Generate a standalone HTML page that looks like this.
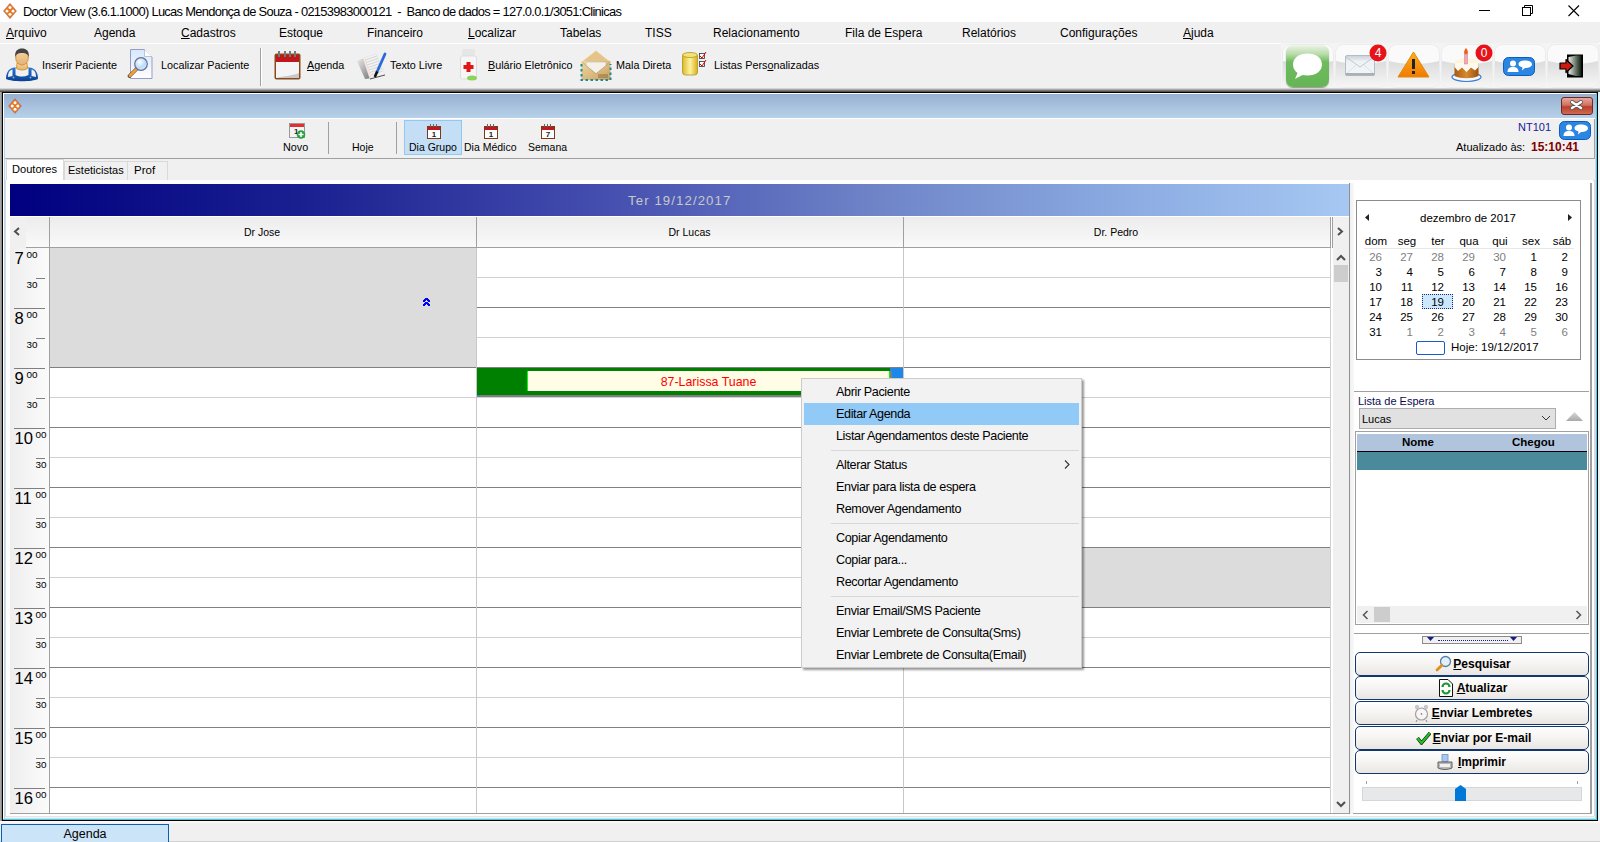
<!DOCTYPE html><html><head><meta charset="utf-8"><style>
*{box-sizing:border-box}
body{margin:0;width:1600px;height:842px;position:relative;overflow:hidden;background:#f0f0f0;font-family:"Liberation Sans",sans-serif;color:#000}
.t{position:absolute;white-space:pre;line-height:1}
u{text-decoration:underline;text-underline-offset:1px}
</style></head><body>
<div style="position:absolute;left:0px;top:0px;width:1600px;height:22px;background:#fff"></div>
<svg style="position:absolute;left:3px;top:3px" width="14" height="16" viewBox="0 0 14 16"><path d="M7 0.3 L13.6 8 L7 15.7 L0.4 8 Z" fill="#e8761e" stroke="#7a5a9a" stroke-width="0.35"/><circle cx="7" cy="4.6" r="1.5" fill="#fff"/><circle cx="7" cy="11.2" r="1.5" fill="#fff"/><circle cx="4" cy="8" r="1.5" fill="#fff"/><circle cx="10" cy="8" r="1.5" fill="#fff"/></svg>
<div class="t" style="left:23px;top:6px;font-size:12.9px;letter-spacing:-0.7px;color:#000">Doctor View (3.6.1.1000) Lucas Mendonça de Souza - 02153983000121  -  Banco de dados = 127.0.0.1/3051:Clinicas</div>
<div style="position:absolute;left:1479px;top:10px;width:11px;height:1px;background:#000"></div>
<svg style="position:absolute;left:1522px;top:5px" width="12" height="12" viewBox="0 0 12 12"><rect x="0.5" y="2.5" width="8" height="8" fill="none" stroke="#000"/><path d="M2.5 2.5 V0.5 H10.5 V8.5 H8.5" fill="none" stroke="#000"/></svg>
<svg style="position:absolute;left:1568px;top:5px" width="12" height="12" viewBox="0 0 12 12"><path d="M0.5 0.5 L11 11 M11 0.5 L0.5 11" stroke="#000" stroke-width="1.1"/></svg>
<div style="position:absolute;left:0px;top:22px;width:1600px;height:21px;background:#f0f0f0"></div>
<div class="t" style="left:6px;top:27px;font-size:12px"><u>A</u>rquivo</div>
<div class="t" style="left:94px;top:27px;font-size:12px">Agenda</div>
<div class="t" style="left:181px;top:27px;font-size:12px"><u>C</u>adastros</div>
<div class="t" style="left:279px;top:27px;font-size:12px">Estoque</div>
<div class="t" style="left:367px;top:27px;font-size:12px">Financeiro</div>
<div class="t" style="left:468px;top:27px;font-size:12px"><u>L</u>ocalizar</div>
<div class="t" style="left:560px;top:27px;font-size:12px">Tabelas</div>
<div class="t" style="left:645px;top:27px;font-size:12px">TISS</div>
<div class="t" style="left:713px;top:27px;font-size:12px">Relacionamento</div>
<div class="t" style="left:845px;top:27px;font-size:12px">Fila de Espera</div>
<div class="t" style="left:962px;top:27px;font-size:12px">Relatórios</div>
<div class="t" style="left:1060px;top:27px;font-size:12px">Configurações</div>
<div class="t" style="left:1183px;top:27px;font-size:12px"><u>A</u>juda</div>
<div style="position:absolute;left:0px;top:43px;width:1600px;height:1px;background:#fff"></div>
<div style="position:absolute;left:0px;top:44px;width:1600px;height:46px;background:#f0f0f0"></div>
<svg style="position:absolute;left:0px;top:44px" width="44" height="44" viewBox="0 0 44 44"><defs><linearGradient id="ov" x1="0" y1="0" x2="0" y2="1"><stop offset="0" stop-color="#2a78d0"/><stop offset="1" stop-color="#0a3f92"/></linearGradient>
<linearGradient id="fc" x1="0" y1="0" x2="0" y2="1"><stop offset="0" stop-color="#f6d3a0"/><stop offset="1" stop-color="#e2b07a"/></linearGradient></defs>
<path d="M6 35 C6 28 9 24 15 23.5 L29 23.5 C35 24 38 28 38 35 C32 38 12 38 6 35 Z" fill="url(#ov)"/>
<path d="M8 33 C8 28 10 26 12.5 25.5 L12.5 32 Z" fill="#f2f2f2"/><path d="M36 33 C36 28 34 26 31.5 25.5 L31.5 32 Z" fill="#f2f2f2"/>
<path d="M15.5 24 L28.5 24 L28.5 31 C24 33 20 33 15.5 31 Z" fill="#f0f0f0"/>
<circle cx="13.5" cy="33.5" r="1" fill="#7aa8e8"/><circle cx="30.5" cy="33.5" r="1" fill="#7aa8e8"/>
<path d="M17 19 L27 19 L27.5 24.5 C24 26.5 20 26.5 16.5 24.5 Z" fill="url(#fc)" stroke="#d08a10" stroke-width="0.8"/>
<ellipse cx="22" cy="14" rx="6.3" ry="7" fill="url(#fc)" stroke="#d08a10" stroke-width="0.8"/>
<path d="M15.2 13.5 C14.5 7 17.5 4.5 22 4.5 C26.5 4.5 29.5 7 28.8 13.5 C28 10 26 9 22 9 C18 9 16 10 15.2 13.5 Z" fill="#444"/></svg>
<div class="t" style="left:42px;top:60px;font-size:10.8px">Inserir Paciente</div>
<svg style="position:absolute;left:127px;top:49px" width="26" height="31" viewBox="0 0 26 31"><defs><linearGradient id="dc" x1="0" y1="0" x2="0" y2="1"><stop offset="0" stop-color="#d4e8fc"/><stop offset="1" stop-color="#ffffff"/></linearGradient><radialGradient id="lens" cx="0.4" cy="0.35" r="0.7"><stop offset="0" stop-color="#ffffff"/><stop offset="0.6" stop-color="#b8def8"/><stop offset="1" stop-color="#d8f0ff"/></radialGradient></defs>
<path d="M3.5 0.5 H17.5 L25 8 V29.5 H3.5 Z" fill="url(#dc)" stroke="#9a9ac8"/><path d="M17.5 0.5 V7.5 H25" fill="#fff" stroke="#b0b8c8" stroke-width="0.8"/>
<path d="M9 20.5 L2.5 27" stroke="#303030" stroke-width="3.6" stroke-linecap="round"/><path d="M9 20.5 L2.8 26.7" stroke="#f4a030" stroke-width="2.8" stroke-linecap="round"/>
<circle cx="14" cy="15" r="6.3" fill="url(#lens)" stroke="#6a6a9a" stroke-width="1.2"/></svg>
<div class="t" style="left:161px;top:60px;font-size:10.8px">Localizar Paciente</div>
<div style="position:absolute;left:260px;top:48px;width:1px;height:38px;background:#a0a0a0"></div>
<div style="position:absolute;left:261px;top:48px;width:1px;height:38px;background:#fff"></div>
<svg style="position:absolute;left:274px;top:51px" width="27" height="29" viewBox="0 0 27 29"><rect x="0.5" y="2.5" width="26" height="26" rx="2" fill="#8a4a1c"/><rect x="2" y="4" width="23" height="7" fill="#c0161c"/><rect x="2" y="11" width="23" height="16" fill="#f4f4f4"/><path d="M2 27 L25 27 L25 22 C18 25 10 25 2 27Z" fill="#c8c8c8"/>
<rect x="4" y="0" width="2" height="6" fill="#777"/><rect x="10" y="0" width="2" height="6" fill="#777"/><rect x="15" y="0" width="2" height="6" fill="#777"/><rect x="20" y="0" width="2" height="6" fill="#777"/></svg>
<div class="t" style="left:307px;top:60px;font-size:10.8px"><u>A</u>genda</div>
<svg style="position:absolute;left:354px;top:49px" width="36" height="31" viewBox="0 0 36 31"><defs><linearGradient id="bs" x1="0" y1="0" x2="1" y2="1"><stop offset="0" stop-color="#f0f0f0"/><stop offset="1" stop-color="#707070"/></linearGradient></defs>
<path d="M3 12 L12 8 L19 29 L11 30 Z" fill="url(#bs)"/>
<path d="M9 9 L22 5 L31 25 L16 30 Z" fill="#f2f2f2" stroke="#e0e0e0" stroke-width="0.6"/>
<path d="M11 11 L23 7 M12 13.5 L24 9.5 M13 16 L25 12 M14 18.5 L26 14.5 M15 21 L27 17 M16 23.5 L28 19.5 M17 26 L28.5 22" stroke="#c8c8c8" stroke-width="0.7"/>
<path d="M11 10 L17 29" stroke="#f8c0a0" stroke-width="0.5"/>
<path d="M16 30 L31 26" stroke="#404040" stroke-width="0.9"/>
<path d="M31 5 L23 23" stroke="#2a6ad8" stroke-width="2.8" stroke-linecap="round"/><path d="M23.2 22.5 L20.8 28" stroke="#111" stroke-width="2.6"/></svg>
<div class="t" style="left:390px;top:60px;font-size:10.8px">Texto Livre</div>
<svg style="position:absolute;left:459px;top:49px" width="19" height="32" viewBox="0 0 19 32"><rect x="3" y="0" width="13" height="7" rx="1.5" fill="#e6e6e6"/><rect x="1.5" y="7" width="16" height="23" rx="2" fill="#f6f6f6" stroke="#ddd"/>
<path d="M7.5 13 H11.5 V16 H14.5 V20 H11.5 V23 H7.5 V20 H4.5 V16 H7.5 Z" fill="#e01515"/><ellipse cx="13" cy="29" rx="5" ry="2.5" fill="#8cd35a"/></svg>
<div class="t" style="left:488px;top:60px;font-size:10.8px"><u>B</u>ulário Eletrônico</div>
<svg style="position:absolute;left:580px;top:49px" width="32" height="32" viewBox="0 0 32 32"><defs><linearGradient id="env" x1="0" y1="0" x2="1" y2="1"><stop offset="0" stop-color="#f2d8a0"/><stop offset="1" stop-color="#c8a060"/></linearGradient></defs>
<path d="M1.5 13 L16 1.5 L30.5 13 Z" fill="#e4c488" stroke="#f4ead0" stroke-width="1" stroke-dasharray="1.5 1"/>
<rect x="1.5" y="12" width="29" height="19" fill="url(#env)"/>
<path d="M6 13 L26 13 L26 17 L16 24.5 L6 17 Z" fill="#f4f0ea" stroke="#b8b0a0" stroke-width="0.5"/>
<path d="M2 13 L16 25 L30 13" fill="none" stroke="#c09a60" stroke-width="0.6"/>
<path d="M18 26 H28 M18 28 H28" stroke="#8a6a3a" stroke-width="0.9"/>
<path d="M1.5 15 V31 H30.5 V15" fill="none" stroke="#1a8a9a" stroke-width="2" stroke-dasharray="2.5 2.5"/></svg>
<div class="t" style="left:616px;top:60px;font-size:10.8px">Mala Direta</div>
<svg style="position:absolute;left:682px;top:52px" width="25" height="25" viewBox="0 0 25 25"><defs><linearGradient id="cy" x1="0" x2="1"><stop offset="0" stop-color="#d9b82a"/><stop offset="0.5" stop-color="#fff2a0"/><stop offset="1" stop-color="#d5b020"/></linearGradient></defs>
<rect x="0.5" y="2" width="15" height="21" rx="3" fill="url(#cy)" stroke="#b39510" stroke-width="0.8"/><ellipse cx="8" cy="3" rx="7.5" ry="2.5" fill="#f3e27a" stroke="#b39510" stroke-width="0.8"/>
<rect x="17.5" y="1.5" width="5" height="5" fill="#fff" stroke="#333" stroke-width="0.8"/><rect x="17.5" y="9.5" width="5" height="5" fill="#fff" stroke="#333" stroke-width="0.8"/><path d="M18 4 L20 6 L24 0 M18 12 L20 14 L24 8" stroke="#d00" stroke-width="1" fill="none"/></svg>
<div class="t" style="left:714px;top:60px;font-size:10.8px">Listas Pers<u>o</u>nalizadas</div>
<div style="position:absolute;left:1281px;top:43px;width:317px;height:46px;background:#f4f4f4"></div>
<svg style="position:absolute;left:1282px;top:44px" width="52" height="44" viewBox="0 0 52 44"><defs><linearGradient id="gb0" x1="0" y1="0" x2="0" y2="1"><stop offset="0" stop-color="#dcdcdc"/><stop offset="1" stop-color="#f6f6f6"/></linearGradient></defs>
<rect x="0.5" y="0.5" width="51" height="43" rx="8" fill="#fafafa" stroke="#ececec"/>
<path d="M1 17 C15 21 37 21 51 17 L51 36 C51 40 48 43 44 43 L8 43 C4 43 1 40 1 36 Z" fill="url(#gb0)"/></svg>
<svg style="position:absolute;left:1335px;top:44px" width="52" height="44" viewBox="0 0 52 44"><defs><linearGradient id="gb1" x1="0" y1="0" x2="0" y2="1"><stop offset="0" stop-color="#dcdcdc"/><stop offset="1" stop-color="#f6f6f6"/></linearGradient></defs>
<rect x="0.5" y="0.5" width="51" height="43" rx="8" fill="#fafafa" stroke="#ececec"/>
<path d="M1 17 C15 21 37 21 51 17 L51 36 C51 40 48 43 44 43 L8 43 C4 43 1 40 1 36 Z" fill="url(#gb1)"/></svg>
<svg style="position:absolute;left:1388px;top:44px" width="52" height="44" viewBox="0 0 52 44"><defs><linearGradient id="gb2" x1="0" y1="0" x2="0" y2="1"><stop offset="0" stop-color="#dcdcdc"/><stop offset="1" stop-color="#f6f6f6"/></linearGradient></defs>
<rect x="0.5" y="0.5" width="51" height="43" rx="8" fill="#fafafa" stroke="#ececec"/>
<path d="M1 17 C15 21 37 21 51 17 L51 36 C51 40 48 43 44 43 L8 43 C4 43 1 40 1 36 Z" fill="url(#gb2)"/></svg>
<svg style="position:absolute;left:1441px;top:44px" width="52" height="44" viewBox="0 0 52 44"><defs><linearGradient id="gb3" x1="0" y1="0" x2="0" y2="1"><stop offset="0" stop-color="#dcdcdc"/><stop offset="1" stop-color="#f6f6f6"/></linearGradient></defs>
<rect x="0.5" y="0.5" width="51" height="43" rx="8" fill="#fafafa" stroke="#ececec"/>
<path d="M1 17 C15 21 37 21 51 17 L51 36 C51 40 48 43 44 43 L8 43 C4 43 1 40 1 36 Z" fill="url(#gb3)"/></svg>
<svg style="position:absolute;left:1494px;top:44px" width="52" height="44" viewBox="0 0 52 44"><defs><linearGradient id="gb4" x1="0" y1="0" x2="0" y2="1"><stop offset="0" stop-color="#dcdcdc"/><stop offset="1" stop-color="#f6f6f6"/></linearGradient></defs>
<rect x="0.5" y="0.5" width="51" height="43" rx="8" fill="#fafafa" stroke="#ececec"/>
<path d="M1 17 C15 21 37 21 51 17 L51 36 C51 40 48 43 44 43 L8 43 C4 43 1 40 1 36 Z" fill="url(#gb4)"/></svg>
<svg style="position:absolute;left:1547px;top:44px" width="52" height="44" viewBox="0 0 52 44"><defs><linearGradient id="gb5" x1="0" y1="0" x2="0" y2="1"><stop offset="0" stop-color="#dcdcdc"/><stop offset="1" stop-color="#f6f6f6"/></linearGradient></defs>
<rect x="0.5" y="0.5" width="51" height="43" rx="8" fill="#fafafa" stroke="#ececec"/>
<path d="M1 17 C15 21 37 21 51 17 L51 36 C51 40 48 43 44 43 L8 43 C4 43 1 40 1 36 Z" fill="url(#gb5)"/></svg>
<div style="position:absolute;left:1286px;top:45px;width:43px;height:42px;border-radius:7px;background:linear-gradient(#eef4ea 0%,#b8dca8 22%,#70bb60 40%,#64b554 100%);box-shadow:0 1px 1px #9a9a9a"></div>
<svg style="position:absolute;left:1292px;top:53px" width="31" height="27" viewBox="0 0 31 27"><path d="M15.5 0.5 C24 0.5 30 5 30 11.5 C30 18 24 22.5 15.5 22.5 C13.5 22.5 12 22.3 10.5 22 L3 26 L5.5 20 C2.5 18 1 15 1 11.5 C1 5 7 0.5 15.5 0.5 Z" fill="#fff"/></svg>
<svg style="position:absolute;left:1345px;top:55px" width="30" height="21" viewBox="0 0 30 21"><defs><linearGradient id="ml" x1="0" y1="0" x2="0" y2="1"><stop offset="0" stop-color="#c8d0d8"/><stop offset="0.3" stop-color="#eef2f5"/><stop offset="1" stop-color="#f4f6f8"/></linearGradient></defs><rect x="0.5" y="0.5" width="29" height="20" rx="1.5" fill="url(#ml)" stroke="#b4bcc4"/><path d="M1 2 L15 12 L29 2" fill="none" stroke="#c0c8d0" stroke-width="1"/><path d="M1 19 L11 10 M29 19 L19 10" stroke="#d4dae0" stroke-width="0.8"/><rect x="0.5" y="18" width="29" height="2.5" fill="#a8b0b8"/></svg>
<svg style="position:absolute;left:1369px;top:44px" width="18" height="18" viewBox="0 0 18 18"><circle cx="9" cy="9" r="8.5" fill="#e8121a"/><text x="9" y="13.2" font-family="Liberation Sans" font-size="12" fill="#fff" text-anchor="middle">4</text></svg>
<svg style="position:absolute;left:1397px;top:51px" width="33" height="27" viewBox="0 0 33 27"><defs><linearGradient id="wr" x1="0" y1="0" x2="0" y2="1"><stop offset="0" stop-color="#ffb020"/><stop offset="1" stop-color="#f07a00"/></linearGradient></defs><path d="M16.5 1 L32 26 L1 26 Z" fill="url(#wr)" stroke="#e08a10" stroke-linejoin="round"/><rect x="15" y="8" width="3" height="10" fill="#222"/><rect x="15" y="20" width="3" height="3" fill="#222"/></svg>
<svg style="position:absolute;left:1451px;top:48px" width="32" height="36" viewBox="0 0 32 36"><defs><linearGradient id="ck" x1="0" x2="1"><stop offset="0" stop-color="#a85a10"/><stop offset="0.5" stop-color="#d88a30"/><stop offset="1" stop-color="#9a5010"/></linearGradient></defs>
<ellipse cx="15.5" cy="29" rx="14.5" ry="4.5" fill="#f4f8ff" stroke="#3a7ad0" stroke-width="1.2"/>
<path d="M3.5 15 H27.5 V28 C21 31 10 31 3.5 28 Z" fill="url(#ck)"/>
<ellipse cx="15.5" cy="15" rx="12" ry="4.5" fill="#fff4d8"/>
<path d="M3.5 15 L3.5 19 L7 23 L11 19.5 L15.5 24 L20 19.5 L24 22.5 L27.5 19 L27.5 15 Z" fill="#fffaf0"/>
<rect x="13.5" y="5" width="3" height="11" fill="#f0a8b8" stroke="#d07890" stroke-width="0.5"/>
<path d="M15 0 C17.5 3 17.5 5.5 15 6.5 C12.5 5.5 12.5 3 15 0Z" fill="#f06010"/></svg>
<svg style="position:absolute;left:1475px;top:44px" width="18" height="18" viewBox="0 0 18 18"><circle cx="9" cy="9" r="8.5" fill="#e8121a"/><text x="9" y="13.2" font-family="Liberation Sans" font-size="12" fill="#fff" text-anchor="middle">0</text></svg>
<svg style="position:absolute;left:1503px;top:57px" width="32" height="19" viewBox="0 0 32 19"><rect x="0.5" y="0.5" width="31" height="18" rx="5" fill="#2a86e0" stroke="#0b5cc0"/><circle cx="10" cy="6.5" r="3" fill="#fff"/><path d="M4.5 15 C4.5 11 7 10 10 10 C13 10 15.5 11 15.5 15 Z" fill="#fff"/><path d="M22 3.5 C26 3.5 29 5 29 7.3 C29 9.6 26 11 22 11 L19 13.5 L19.5 10.5 C17 9.8 15.5 8.8 15.5 7.3 C15.5 5 18 3.5 22 3.5Z" fill="#fff"/></svg>
<svg style="position:absolute;left:1559px;top:54px" width="26" height="25" viewBox="0 0 26 25"><defs><linearGradient id="dr" x1="0" x2="1"><stop offset="0" stop-color="#e8e8e8"/><stop offset="0.55" stop-color="#6a7a6a"/><stop offset="1" stop-color="#101810"/></linearGradient></defs>
<rect x="8" y="0.5" width="16" height="23" fill="#000"/><path d="M9.5 3 L17 1.5 L22.5 1.5 L22.5 22 L17 22 L9.5 20 Z" fill="url(#dr)"/>
<path d="M1 9 H7 V5.5 L14 12 L7 18.5 V15 H1 Z" fill="#cc1a10" stroke="#000" stroke-width="1.2" stroke-linejoin="round"/></svg>
<div style="position:absolute;left:0px;top:88px;width:1600px;height:1px;background:#d4d4d4"></div>
<div style="position:absolute;left:0px;top:89px;width:1600px;height:1px;background:#a8a8a8"></div>
<div style="position:absolute;left:0px;top:90px;width:1600px;height:1px;background:#7a7a7a"></div>
<div style="position:absolute;left:0px;top:91px;width:1600px;height:1px;background:#505050"></div>
<div style="position:absolute;left:0px;top:92px;width:1px;height:729px;background:#a8a8a8"></div>
<div style="position:absolute;left:1px;top:92px;width:1px;height:729px;background:#8c8c8c"></div>
<div style="position:absolute;left:2px;top:92px;width:1596px;height:729px;background:#000"></div>
<div style="position:absolute;left:3px;top:93px;width:1594px;height:727px;background:#fff"></div>
<div style="position:absolute;left:4px;top:94px;width:1593px;height:726px;background:#cfd9ee"></div>
<div style="position:absolute;left:1596px;top:93px;width:1px;height:727px;background:#36d2f2"></div>
<div style="position:absolute;left:3px;top:819px;width:1594px;height:1px;background:#36d2f2"></div>
<div style="position:absolute;left:4px;top:94px;width:1px;height:725px;background:#b8d4ee"></div>
<div style="position:absolute;left:5px;top:94px;width:1590px;height:724px;background:#f0f0f0"></div>
<div style="position:absolute;left:0px;top:821px;width:1600px;height:2px;background:#f8f8f8"></div>
<div style="position:absolute;left:4px;top:94px;width:1592px;height:24px;background:linear-gradient(#97b0cf,#b8d1ea)"></div>
<svg style="position:absolute;left:8px;top:98px" width="14" height="16" viewBox="0 0 14 16"><path d="M7 0.5 L13.5 8 L7 15.5 L0.5 8 Z" fill="#e8761e" stroke="#8a5a9a" stroke-width="0.4"/><circle cx="7" cy="4.8" r="1.5" fill="#fff"/><circle cx="7" cy="11.2" r="1.5" fill="#fff"/><circle cx="4.2" cy="8" r="1.5" fill="#fff"/><circle cx="9.8" cy="8" r="1.5" fill="#fff"/></svg>
<div style="position:absolute;left:1561px;top:97px;width:32px;height:18px;border-radius:3px;border:1px solid #6a2a2a;background:linear-gradient(#e8a89c 0%,#d07060 45%,#b8402a 55%,#d06a50 100%)"></div>
<svg style="position:absolute;left:1569px;top:99px" width="15" height="12" viewBox="0 0 15 12"><path d="M3 3 L12 9 M12 3 L3 9" stroke="#555" stroke-width="4" stroke-linecap="round"/><path d="M3 3 L12 9 M12 3 L3 9" stroke="#fff" stroke-width="2.4" stroke-linecap="round"/></svg>
<div style="position:absolute;left:5px;top:118px;width:1590px;height:41px;background:#f0f0f0;border-bottom:1px solid #a0a0a0;border-right:1px solid #a0a0a0"></div>
<div style="position:absolute;left:5px;top:118px;width:1590px;height:1px;background:#fff"></div>
<svg style="position:absolute;left:289px;top:123px" width="17" height="16" viewBox="0 0 17 16"><rect x="0.5" y="0.5" width="15" height="14" fill="#f4f4f4" stroke="#999"/><rect x="1" y="1" width="14" height="3" fill="#e03030"/><text x="5" y="11" font-family="Liberation Sans" font-size="8" font-weight="bold" fill="#222">1</text><circle cx="12" cy="11.5" r="4.3" fill="#2aa040"/><path d="M12 9 V14 M9.5 11.5 H14.5" stroke="#fff" stroke-width="1.5"/></svg>
<div class="t" style="left:283px;top:142px;font-size:10.8px">Novo</div>
<div style="position:absolute;left:328px;top:122px;width:1px;height:32px;background:#a0a0a0"></div>
<div class="t" style="left:352px;top:142px;font-size:10.5px">Hoje</div>
<div style="position:absolute;left:396px;top:122px;width:1px;height:32px;background:#a0a0a0"></div>
<div style="position:absolute;left:404px;top:120px;width:58px;height:35px;background:#c4dff5;border:1px solid #90c8f4"></div>
<svg style="position:absolute;left:427px;top:124px" width="14" height="15" viewBox="0 0 14 15"><rect x="0.5" y="2.5" width="13" height="12" fill="#fff" stroke="#7a3a1a"/><rect x="1" y="3" width="12" height="3" fill="#c0161c"/><rect x="3" y="0" width="1" height="3" fill="#666"/><rect x="6" y="0" width="1" height="3" fill="#666"/><rect x="9" y="0" width="1" height="3" fill="#666"/><text x="7.0" y="13" font-family="Liberation Sans" font-size="8" font-weight="bold" text-anchor="middle" fill="#222">1</text></svg>
<div class="t" style="left:409px;top:142px;font-size:10.5px">Dia Grupo</div>
<svg style="position:absolute;left:484px;top:124px" width="14" height="15" viewBox="0 0 14 15"><rect x="0.5" y="2.5" width="13" height="12" fill="#fff" stroke="#7a3a1a"/><rect x="1" y="3" width="12" height="3" fill="#c0161c"/><rect x="3" y="0" width="1" height="3" fill="#666"/><rect x="6" y="0" width="1" height="3" fill="#666"/><rect x="9" y="0" width="1" height="3" fill="#666"/><text x="7.0" y="13" font-family="Liberation Sans" font-size="8" font-weight="bold" text-anchor="middle" fill="#222">1</text></svg>
<div class="t" style="left:464px;top:142px;font-size:10.5px">Dia Médico</div>
<svg style="position:absolute;left:541px;top:124px" width="14" height="15" viewBox="0 0 14 15"><rect x="0.5" y="2.5" width="13" height="12" fill="#fff" stroke="#7a3a1a"/><rect x="1" y="3" width="12" height="3" fill="#c0161c"/><rect x="3" y="0" width="1" height="3" fill="#666"/><rect x="6" y="0" width="1" height="3" fill="#666"/><rect x="9" y="0" width="1" height="3" fill="#666"/><text x="7.0" y="13" font-family="Liberation Sans" font-size="8" font-weight="bold" text-anchor="middle" fill="#222">7</text></svg>
<div class="t" style="left:528px;top:142px;font-size:10.5px">Semana</div>
<div class="t" style="left:1518px;top:122px;font-size:11px;color:#1a1a9a">NT101</div>
<svg style="position:absolute;left:1559px;top:121px" width="32" height="19" viewBox="0 0 32 19"><rect x="0.5" y="0.5" width="31" height="18" rx="5" fill="#2a86e0" stroke="#0b5cc0"/><circle cx="10" cy="6.5" r="3" fill="#fff"/><path d="M4.5 15 C4.5 11 7 10 10 10 C13 10 15.5 11 15.5 15 Z" fill="#fff"/><path d="M22 3.5 C26 3.5 29 5 29 7.3 C29 9.6 26 11 22 11 L19 13.5 L19.5 10.5 C17 9.8 15.5 8.8 15.5 7.3 C15.5 5 18 3.5 22 3.5Z" fill="#fff"/></svg>
<div class="t" style="left:1456px;top:142px;font-size:11px">Atualizado às:</div>
<div class="t" style="left:1531px;top:141px;font-size:12px;font-weight:bold;color:#800000">15:10:41</div>
<div style="position:absolute;left:5px;top:159px;width:1590px;height:660px;background:#f0f0f0"></div>
<div style="position:absolute;left:5px;top:180px;width:1590px;height:639px;background:#fff;border:1px solid #d9d9d9"></div>
<div style="position:absolute;left:64px;top:161px;width:64px;height:19px;background:#f0f0f0;border:1px solid #d9d9d9;border-bottom:none"></div>
<div style="position:absolute;left:128px;top:161px;width:40px;height:19px;background:#f0f0f0;border:1px solid #d9d9d9;border-bottom:none;border-left:none"></div>
<div style="position:absolute;left:6px;top:159px;width:58px;height:22px;background:#fff;border:1px solid #d9d9d9;border-bottom:none"></div>
<div class="t" style="left:12px;top:164px;font-size:11.1px">Doutores</div>
<div class="t" style="left:68px;top:165px;font-size:11px">Esteticistas</div>
<div class="t" style="left:134px;top:165px;font-size:11.5px">Prof</div>
<div style="position:absolute;left:6px;top:180px;width:1587px;height:636px;background:#fff"></div>
<div style="position:absolute;left:5px;top:816px;width:1590px;height:1px;background:#e4e4e4"></div>
<div style="position:absolute;left:5px;top:817px;width:1590px;height:1px;background:#f4f4f4"></div>
<div style="position:absolute;left:10px;top:184px;width:1339px;height:32px;background:linear-gradient(90deg,#000080 0%,#1a2090 22%,#4650b0 45%,#6f85c8 65%,#8eaee4 85%,#a6c8f2 100%)"></div>
<div class="t" style="left:628px;top:194px;font-size:13.2px;letter-spacing:1.1px;color:#c8c8c8">Ter 19/12/2017</div>
<div style="position:absolute;left:10px;top:216px;width:1339px;height:1px;background:#fff"></div>
<div style="position:absolute;left:10px;top:217px;width:16px;height:31px;background:#f0f0f0"></div>
<div style="position:absolute;left:26px;top:217px;width:1305px;height:31px;background:linear-gradient(#ececec,#fafafa)"></div>
<div style="position:absolute;left:26px;top:247px;width:1305px;height:1px;background:#a0a0a0"></div>
<div style="position:absolute;left:49px;top:217px;width:1px;height:31px;background:#a0a0a0"></div>
<div style="position:absolute;left:476px;top:217px;width:1px;height:31px;background:#a0a0a0"></div>
<div style="position:absolute;left:903px;top:217px;width:1px;height:31px;background:#a0a0a0"></div>
<div style="position:absolute;left:1330px;top:217px;width:1px;height:31px;background:#a0a0a0"></div>
<div style="position:absolute;left:1331px;top:217px;width:18px;height:31px;background:#f0f0f0"></div>
<div style="position:absolute;left:1331px;top:217px;width:1px;height:31px;background:#fff"></div>
<div style="position:absolute;left:1332px;top:217px;width:1px;height:31px;background:#a0a0a0"></div>
<svg style="position:absolute;left:13px;top:227px" width="8" height="9" viewBox="0 0 8 9"><path d="M6 1 L2 4.5 L6 8" fill="none" stroke="#505050" stroke-width="2"/></svg>
<svg style="position:absolute;left:1336px;top:227px" width="8" height="9" viewBox="0 0 8 9"><path d="M2 1 L6 4.5 L2 8" fill="none" stroke="#505050" stroke-width="2"/></svg>
<div class="t" style="left:162px;top:227px;width:200px;text-align:center;font-size:10.5px">Dr Jose</div>
<div class="t" style="left:589.5px;top:227px;width:200px;text-align:center;font-size:10.5px">Dr Lucas</div>
<div class="t" style="left:1016px;top:227px;width:200px;text-align:center;font-size:10.5px">Dr. Pedro</div>
<div style="position:absolute;left:10px;top:248px;width:39px;height:565px;background:linear-gradient(90deg,#eeeeee,#fbfbfb)"></div>
<div style="position:absolute;left:49px;top:248px;width:1px;height:565px;background:#a0a0a0"></div>
<div style="position:absolute;left:50px;top:248px;width:1280px;height:565px;background:#fff"></div>
<div style="position:absolute;left:50px;top:277px;width:1280px;height:1px;background:#d0d0d0"></div>
<div style="position:absolute;left:50px;top:307px;width:1280px;height:1px;background:#808080"></div>
<div style="position:absolute;left:50px;top:337px;width:1280px;height:1px;background:#d0d0d0"></div>
<div style="position:absolute;left:50px;top:367px;width:1280px;height:1px;background:#808080"></div>
<div style="position:absolute;left:50px;top:397px;width:1280px;height:1px;background:#d0d0d0"></div>
<div style="position:absolute;left:50px;top:427px;width:1280px;height:1px;background:#808080"></div>
<div style="position:absolute;left:50px;top:457px;width:1280px;height:1px;background:#d0d0d0"></div>
<div style="position:absolute;left:50px;top:487px;width:1280px;height:1px;background:#808080"></div>
<div style="position:absolute;left:50px;top:517px;width:1280px;height:1px;background:#d0d0d0"></div>
<div style="position:absolute;left:50px;top:547px;width:1280px;height:1px;background:#808080"></div>
<div style="position:absolute;left:50px;top:577px;width:1280px;height:1px;background:#d0d0d0"></div>
<div style="position:absolute;left:50px;top:607px;width:1280px;height:1px;background:#808080"></div>
<div style="position:absolute;left:50px;top:637px;width:1280px;height:1px;background:#d0d0d0"></div>
<div style="position:absolute;left:50px;top:667px;width:1280px;height:1px;background:#808080"></div>
<div style="position:absolute;left:50px;top:697px;width:1280px;height:1px;background:#d0d0d0"></div>
<div style="position:absolute;left:50px;top:727px;width:1280px;height:1px;background:#808080"></div>
<div style="position:absolute;left:50px;top:757px;width:1280px;height:1px;background:#d0d0d0"></div>
<div style="position:absolute;left:50px;top:787px;width:1280px;height:1px;background:#808080"></div>
<div style="position:absolute;left:50px;top:248px;width:426px;height:119px;background:#dcdcdc"></div>
<div style="position:absolute;left:904px;top:548px;width:426px;height:59px;background:#dcdcdc"></div>
<div style="position:absolute;left:476px;top:248px;width:1px;height:565px;background:#c8c8c8"></div>
<div style="position:absolute;left:903px;top:248px;width:1px;height:565px;background:#c8c8c8"></div>
<div style="position:absolute;left:1330px;top:248px;width:1px;height:565px;background:#d0d0d0"></div>
<div style="position:absolute;left:10px;top:813px;width:1340px;height:1px;background:#a0a0a0"></div>
<div class="t" style="left:14.5px;top:250.5px;font-size:16.6px;color:#000">7</div>
<div class="t" style="left:26.5px;top:250px;font-size:9.9px">00</div>
<div style="position:absolute;left:36px;top:278px;width:9px;height:1px;background:#808080"></div>
<div class="t" style="left:26.5px;top:280px;font-size:9.9px">30</div>
<div class="t" style="left:14.5px;top:310.5px;font-size:16.6px;color:#000">8</div>
<div class="t" style="left:26.5px;top:310px;font-size:9.9px">00</div>
<div style="position:absolute;left:36px;top:338px;width:9px;height:1px;background:#808080"></div>
<div class="t" style="left:26.5px;top:340px;font-size:9.9px">30</div>
<div style="position:absolute;left:14px;top:308px;width:31px;height:1px;background:#808080"></div>
<div class="t" style="left:14.5px;top:370.5px;font-size:16.6px;color:#000">9</div>
<div class="t" style="left:26.5px;top:370px;font-size:9.9px">00</div>
<div style="position:absolute;left:36px;top:398px;width:9px;height:1px;background:#808080"></div>
<div class="t" style="left:26.5px;top:400px;font-size:9.9px">30</div>
<div style="position:absolute;left:14px;top:368px;width:31px;height:1px;background:#808080"></div>
<div class="t" style="left:14.5px;top:430.5px;font-size:16.6px;color:#000">10</div>
<div class="t" style="left:35.5px;top:430px;font-size:9.9px">00</div>
<div style="position:absolute;left:36px;top:458px;width:9px;height:1px;background:#808080"></div>
<div class="t" style="left:35.5px;top:460px;font-size:9.9px">30</div>
<div style="position:absolute;left:14px;top:428px;width:31px;height:1px;background:#808080"></div>
<div class="t" style="left:14.5px;top:490.5px;font-size:16.6px;color:#000">11</div>
<div class="t" style="left:35.5px;top:490px;font-size:9.9px">00</div>
<div style="position:absolute;left:36px;top:518px;width:9px;height:1px;background:#808080"></div>
<div class="t" style="left:35.5px;top:520px;font-size:9.9px">30</div>
<div style="position:absolute;left:14px;top:488px;width:31px;height:1px;background:#808080"></div>
<div class="t" style="left:14.5px;top:550.5px;font-size:16.6px;color:#000">12</div>
<div class="t" style="left:35.5px;top:550px;font-size:9.9px">00</div>
<div style="position:absolute;left:36px;top:578px;width:9px;height:1px;background:#808080"></div>
<div class="t" style="left:35.5px;top:580px;font-size:9.9px">30</div>
<div style="position:absolute;left:14px;top:548px;width:31px;height:1px;background:#808080"></div>
<div class="t" style="left:14.5px;top:610.5px;font-size:16.6px;color:#000">13</div>
<div class="t" style="left:35.5px;top:610px;font-size:9.9px">00</div>
<div style="position:absolute;left:36px;top:638px;width:9px;height:1px;background:#808080"></div>
<div class="t" style="left:35.5px;top:640px;font-size:9.9px">30</div>
<div style="position:absolute;left:14px;top:608px;width:31px;height:1px;background:#808080"></div>
<div class="t" style="left:14.5px;top:670.5px;font-size:16.6px;color:#000">14</div>
<div class="t" style="left:35.5px;top:670px;font-size:9.9px">00</div>
<div style="position:absolute;left:36px;top:698px;width:9px;height:1px;background:#808080"></div>
<div class="t" style="left:35.5px;top:700px;font-size:9.9px">30</div>
<div style="position:absolute;left:14px;top:668px;width:31px;height:1px;background:#808080"></div>
<div class="t" style="left:14.5px;top:730.5px;font-size:16.6px;color:#000">15</div>
<div class="t" style="left:35.5px;top:730px;font-size:9.9px">00</div>
<div style="position:absolute;left:36px;top:758px;width:9px;height:1px;background:#808080"></div>
<div class="t" style="left:35.5px;top:760px;font-size:9.9px">30</div>
<div style="position:absolute;left:14px;top:728px;width:31px;height:1px;background:#808080"></div>
<div class="t" style="left:14.5px;top:790.5px;font-size:16.6px;color:#000">16</div>
<div class="t" style="left:35.5px;top:790px;font-size:9.9px">00</div>
<div style="position:absolute;left:14px;top:788px;width:31px;height:1px;background:#808080"></div>
<div style="position:absolute;left:1333px;top:248px;width:16px;height:565px;background:#f0f0f0"></div>
<div style="position:absolute;left:1349px;top:183px;width:1px;height:631px;background:#909090"></div>
<svg style="position:absolute;left:1336px;top:254px" width="10" height="7" viewBox="0 0 10 7"><path d="M1 6 L5 2 L9 6" fill="none" stroke="#505050" stroke-width="2"/></svg>
<div style="position:absolute;left:1334px;top:265px;width:14px;height:17px;background:#cdcdcd"></div>
<svg style="position:absolute;left:1336px;top:801px" width="10" height="7" viewBox="0 0 10 7"><path d="M1 1 L5 5 L9 1" fill="none" stroke="#505050" stroke-width="2"/></svg>
<svg style="position:absolute;left:423px;top:298px" width="8" height="8" viewBox="0 0 8 8"><g shape-rendering="crispEdges"><rect x="2" y="0" width="3" height="1" fill="#0000ff"/><rect x="1" y="1" width="5" height="1" fill="#0000ff"/><rect x="0" y="2" width="3" height="1" fill="#0000ff"/><rect x="4" y="2" width="3" height="1" fill="#0000ff"/><rect x="0" y="3" width="2" height="1" fill="#0000ff"/><rect x="5" y="3" width="2" height="1" fill="#0000ff"/><rect x="2" y="4" width="3" height="1" fill="#0000ff"/><rect x="1" y="5" width="5" height="1" fill="#0000ff"/><rect x="0" y="6" width="3" height="1" fill="#0000ff"/><rect x="4" y="6" width="3" height="1" fill="#0000ff"/><rect x="0" y="7" width="2" height="1" fill="#0000ff"/><rect x="5" y="7" width="2" height="1" fill="#0000ff"/></g></svg>
<div style="position:absolute;left:477px;top:368px;width:426px;height:2px;background:#808080"></div>
<div style="position:absolute;left:477px;top:368px;width:413px;height:27px;background:#008000"></div>
<div style="position:absolute;left:477px;top:395px;width:426px;height:2px;background:#808080"></div>
<div style="position:absolute;left:477px;top:395px;width:3px;height:1px;background:#1e88e8"></div>
<div style="position:absolute;left:527px;top:371px;width:363px;height:20px;background:#fffde6;border-left:1px solid #00ff00;border-right:1px solid #00ff00"></div>
<div style="position:absolute;left:890px;top:368px;width:13px;height:27px;background:#1e88e8"></div>
<div style="position:absolute;left:890px;top:371px;width:2px;height:24px;background:#808080"></div>
<div class="t" style="left:527px;top:375.5px;width:363px;text-align:center;font-size:12.4px;color:#ff0000">87-Larissa Tuane</div>
<div style="position:absolute;left:1353px;top:183px;width:238px;height:631px;background:#fff"></div>
<div style="position:absolute;left:1350px;top:183px;width:4px;height:631px;background:linear-gradient(90deg,#f0f0f0,#f8f8f8)"></div>
<div style="position:absolute;left:1590px;top:183px;width:2px;height:631px;background:#a0a0a0"></div>
<div style="position:absolute;left:1353px;top:813px;width:239px;height:1px;background:#a0a0a0"></div>
<div style="position:absolute;left:1356px;top:200px;width:225px;height:160px;background:#fff;border:1px solid #8c8c8c"></div>
<svg style="position:absolute;left:1365px;top:214px" width="4" height="7" viewBox="0 0 4 7"><path d="M4 0 L0 3.5 L4 7 Z" fill="#222"/></svg>
<svg style="position:absolute;left:1568px;top:214px" width="4" height="7" viewBox="0 0 4 7"><path d="M0 0 L4 3.5 L0 7 Z" fill="#222"/></svg>
<div class="t" style="left:1368px;top:213px;width:200px;text-align:center;font-size:11.5px">dezembro de 2017</div>
<div class="t" style="left:1357px;top:236px;width:38px;text-align:center;font-size:11.5px">dom</div>
<div class="t" style="left:1388px;top:236px;width:38px;text-align:center;font-size:11.5px">seg</div>
<div class="t" style="left:1419px;top:236px;width:38px;text-align:center;font-size:11.5px">ter</div>
<div class="t" style="left:1450px;top:236px;width:38px;text-align:center;font-size:11.5px">qua</div>
<div class="t" style="left:1481px;top:236px;width:38px;text-align:center;font-size:11.5px">qui</div>
<div class="t" style="left:1512px;top:236px;width:38px;text-align:center;font-size:11.5px">sex</div>
<div class="t" style="left:1543px;top:236px;width:38px;text-align:center;font-size:11.5px">sáb</div>
<div style="position:absolute;left:1364px;top:248px;width:210px;height:1px;background:#e8e8e8"></div>
<div style="position:absolute;left:1422px;top:294px;width:31px;height:15px;background:#cce8ff;border:1px dotted #1a2a6a"></div>
<div class="t" style="left:1342px;top:252px;width:40px;text-align:right;font-size:11.5px;color:#808080">26</div>
<div class="t" style="left:1373px;top:252px;width:40px;text-align:right;font-size:11.5px;color:#808080">27</div>
<div class="t" style="left:1404px;top:252px;width:40px;text-align:right;font-size:11.5px;color:#808080">28</div>
<div class="t" style="left:1435px;top:252px;width:40px;text-align:right;font-size:11.5px;color:#808080">29</div>
<div class="t" style="left:1466px;top:252px;width:40px;text-align:right;font-size:11.5px;color:#808080">30</div>
<div class="t" style="left:1497px;top:252px;width:40px;text-align:right;font-size:11.5px;color:#000">1</div>
<div class="t" style="left:1528px;top:252px;width:40px;text-align:right;font-size:11.5px;color:#000">2</div>
<div class="t" style="left:1342px;top:267px;width:40px;text-align:right;font-size:11.5px;color:#000">3</div>
<div class="t" style="left:1373px;top:267px;width:40px;text-align:right;font-size:11.5px;color:#000">4</div>
<div class="t" style="left:1404px;top:267px;width:40px;text-align:right;font-size:11.5px;color:#000">5</div>
<div class="t" style="left:1435px;top:267px;width:40px;text-align:right;font-size:11.5px;color:#000">6</div>
<div class="t" style="left:1466px;top:267px;width:40px;text-align:right;font-size:11.5px;color:#000">7</div>
<div class="t" style="left:1497px;top:267px;width:40px;text-align:right;font-size:11.5px;color:#000">8</div>
<div class="t" style="left:1528px;top:267px;width:40px;text-align:right;font-size:11.5px;color:#000">9</div>
<div class="t" style="left:1342px;top:282px;width:40px;text-align:right;font-size:11.5px;color:#000">10</div>
<div class="t" style="left:1373px;top:282px;width:40px;text-align:right;font-size:11.5px;color:#000">11</div>
<div class="t" style="left:1404px;top:282px;width:40px;text-align:right;font-size:11.5px;color:#000">12</div>
<div class="t" style="left:1435px;top:282px;width:40px;text-align:right;font-size:11.5px;color:#000">13</div>
<div class="t" style="left:1466px;top:282px;width:40px;text-align:right;font-size:11.5px;color:#000">14</div>
<div class="t" style="left:1497px;top:282px;width:40px;text-align:right;font-size:11.5px;color:#000">15</div>
<div class="t" style="left:1528px;top:282px;width:40px;text-align:right;font-size:11.5px;color:#000">16</div>
<div class="t" style="left:1342px;top:297px;width:40px;text-align:right;font-size:11.5px;color:#000">17</div>
<div class="t" style="left:1373px;top:297px;width:40px;text-align:right;font-size:11.5px;color:#000">18</div>
<div class="t" style="left:1404px;top:297px;width:40px;text-align:right;font-size:11.5px;color:#000">19</div>
<div class="t" style="left:1435px;top:297px;width:40px;text-align:right;font-size:11.5px;color:#000">20</div>
<div class="t" style="left:1466px;top:297px;width:40px;text-align:right;font-size:11.5px;color:#000">21</div>
<div class="t" style="left:1497px;top:297px;width:40px;text-align:right;font-size:11.5px;color:#000">22</div>
<div class="t" style="left:1528px;top:297px;width:40px;text-align:right;font-size:11.5px;color:#000">23</div>
<div class="t" style="left:1342px;top:312px;width:40px;text-align:right;font-size:11.5px;color:#000">24</div>
<div class="t" style="left:1373px;top:312px;width:40px;text-align:right;font-size:11.5px;color:#000">25</div>
<div class="t" style="left:1404px;top:312px;width:40px;text-align:right;font-size:11.5px;color:#000">26</div>
<div class="t" style="left:1435px;top:312px;width:40px;text-align:right;font-size:11.5px;color:#000">27</div>
<div class="t" style="left:1466px;top:312px;width:40px;text-align:right;font-size:11.5px;color:#000">28</div>
<div class="t" style="left:1497px;top:312px;width:40px;text-align:right;font-size:11.5px;color:#000">29</div>
<div class="t" style="left:1528px;top:312px;width:40px;text-align:right;font-size:11.5px;color:#000">30</div>
<div class="t" style="left:1342px;top:327px;width:40px;text-align:right;font-size:11.5px;color:#000">31</div>
<div class="t" style="left:1373px;top:327px;width:40px;text-align:right;font-size:11.5px;color:#808080">1</div>
<div class="t" style="left:1404px;top:327px;width:40px;text-align:right;font-size:11.5px;color:#808080">2</div>
<div class="t" style="left:1435px;top:327px;width:40px;text-align:right;font-size:11.5px;color:#808080">3</div>
<div class="t" style="left:1466px;top:327px;width:40px;text-align:right;font-size:11.5px;color:#808080">4</div>
<div class="t" style="left:1497px;top:327px;width:40px;text-align:right;font-size:11.5px;color:#808080">5</div>
<div class="t" style="left:1528px;top:327px;width:40px;text-align:right;font-size:11.5px;color:#808080">6</div>
<div style="position:absolute;left:1416px;top:341px;width:29px;height:14px;border:1px solid #1a5ac8;border-radius:2px"></div>
<div class="t" style="left:1451px;top:342px;font-size:11.5px">Hoje: 19/12/2017</div>
<div style="position:absolute;left:1354px;top:391px;width:235px;height:1px;background:#a0a0a0"></div>
<div class="t" style="left:1358px;top:396px;font-size:11px;color:#0a0a50">Lista de Espera</div>
<div style="position:absolute;left:1359px;top:408px;width:197px;height:21px;background:#e1e1e1;border:1px solid #adadad"></div>
<div class="t" style="left:1362px;top:414px;font-size:11px">Lucas</div>
<svg style="position:absolute;left:1541px;top:415px" width="10" height="6" viewBox="0 0 10 6"><path d="M1 1 L5 5 L9 1" fill="none" stroke="#333" stroke-width="1"/></svg>
<svg style="position:absolute;left:1566px;top:412px" width="17" height="9" viewBox="0 0 17 9"><defs><linearGradient id="tri" x1="0" y1="0" x2="0" y2="1"><stop offset="0" stop-color="#d8d8d8"/><stop offset="1" stop-color="#a8a8a8"/></linearGradient></defs><path d="M8.5 0 L17 9 L0 9 Z" fill="url(#tri)"/></svg>
<div style="position:absolute;left:1355px;top:431px;width:234px;height:194px;background:#fff;border:1px solid #a0a0a0"></div>
<div style="position:absolute;left:1357px;top:433px;width:230px;height:18px;background:#b0c4de"></div>
<div style="position:absolute;left:1357px;top:433px;width:230px;height:1px;background:#fff"></div>
<div style="position:absolute;left:1357px;top:451px;width:230px;height:1px;background:#000"></div>
<div style="position:absolute;left:1357px;top:452px;width:230px;height:18px;background:#4a8a9a"></div>
<div class="t" style="left:1402px;top:437px;font-size:11.5px;font-weight:bold">Nome</div>
<div class="t" style="left:1512px;top:437px;font-size:11.5px;font-weight:bold">Chegou</div>
<div style="position:absolute;left:1357px;top:606px;width:230px;height:17px;background:#f0f0f0"></div>
<div style="position:absolute;left:1374px;top:607px;width:16px;height:15px;background:#cdcdcd"></div>
<svg style="position:absolute;left:1362px;top:610px" width="7" height="10" viewBox="0 0 7 10"><path d="M5.5 1 L1.5 5 L5.5 9" fill="none" stroke="#555" stroke-width="1.5"/></svg>
<svg style="position:absolute;left:1575px;top:610px" width="7" height="10" viewBox="0 0 7 10"><path d="M1.5 1 L5.5 5 L1.5 9" fill="none" stroke="#555" stroke-width="1.5"/></svg>
<div style="position:absolute;left:1354px;top:633px;width:235px;height:1px;background:#a0a0a0"></div>
<div style="position:absolute;left:1422px;top:636px;width:100px;height:8px;background:#f0f0f0;border:1px solid #8a8a8a"></div>
<div style="position:absolute;left:1438px;top:640px;width:70px;height:1px;border-top:1px dotted #1a1a8a"></div>
<svg style="position:absolute;left:1427px;top:637px" width="7" height="5" viewBox="0 0 7 5"><path d="M0 0 H7 L3.5 4 Z" fill="#1a1a8a"/></svg>
<svg style="position:absolute;left:1510px;top:637px" width="7" height="5" viewBox="0 0 7 5"><path d="M0 0 H7 L3.5 4 Z" fill="#1a1a8a"/></svg>
<div style="position:absolute;left:1355px;top:652px;width:234px;height:24px;border:1.5px solid #12376e;border-radius:5px;background:linear-gradient(#fefefe,#f6f4f2 50%,#e9e6e2)"></div>
<div class="t" style="left:1355px;top:658px;width:234px;text-align:center;font-size:12px;font-weight:bold;color:#000;padding-left:20px"><u>P</u>esquisar</div>
<div style="position:absolute;left:1355px;top:676px;width:234px;height:24px;border:1.5px solid #12376e;border-radius:5px;background:linear-gradient(#fefefe,#f6f4f2 50%,#e9e6e2)"></div>
<div class="t" style="left:1355px;top:682px;width:234px;text-align:center;font-size:12px;font-weight:bold;color:#000;padding-left:20px"><u>A</u>tualizar</div>
<div style="position:absolute;left:1355px;top:701px;width:234px;height:24px;border:1.5px solid #12376e;border-radius:5px;background:linear-gradient(#fefefe,#f6f4f2 50%,#e9e6e2)"></div>
<div class="t" style="left:1355px;top:707px;width:234px;text-align:center;font-size:12px;font-weight:bold;color:#000;padding-left:20px"><u>E</u>nviar Lembretes</div>
<div style="position:absolute;left:1355px;top:726px;width:234px;height:24px;border:1.5px solid #12376e;border-radius:5px;background:linear-gradient(#fefefe,#f6f4f2 50%,#e9e6e2)"></div>
<div class="t" style="left:1355px;top:732px;width:234px;text-align:center;font-size:12px;font-weight:bold;color:#000;padding-left:20px"><u>E</u>nviar por E-mail</div>
<div style="position:absolute;left:1355px;top:750px;width:234px;height:24px;border:1.5px solid #12376e;border-radius:5px;background:linear-gradient(#fefefe,#f6f4f2 50%,#e9e6e2)"></div>
<div class="t" style="left:1355px;top:756px;width:234px;text-align:center;font-size:12px;font-weight:bold;color:#000;padding-left:20px"><u>I</u>mprimir</div>
<svg style="position:absolute;left:1435px;top:655px" width="17" height="18" viewBox="0 0 17 18"><circle cx="10.5" cy="6.5" r="5" fill="#dff0fb" stroke="#5a7fa5" stroke-width="1.3"/><path d="M6.8 10.2 L2 15" stroke="#e0901a" stroke-width="2.8" stroke-linecap="round"/></svg>
<svg style="position:absolute;left:1439px;top:679px" width="14" height="18" viewBox="0 0 14 18"><path d="M0.5 0.5 H9 L13.5 5 V17.5 H0.5 Z" fill="#fff" stroke="#111"/><path d="M3.5 8 A3.5 3.5 0 0 1 10.5 8" fill="none" stroke="#1a9a2a" stroke-width="2.2"/><path d="M10.5 11 A3.5 3.5 0 0 1 3.5 11" fill="none" stroke="#1a9a2a" stroke-width="2.2"/></svg>
<svg style="position:absolute;left:1414px;top:704px" width="15" height="18" viewBox="0 0 15 18"><circle cx="7.5" cy="10" r="6" fill="#f6f6f6" stroke="#a0a0a0" stroke-width="1.2"/><circle cx="3" cy="3" r="2.2" fill="#c8c8c8"/><circle cx="12" cy="3" r="2.2" fill="#c8c8c8"/><path d="M3 16 L2 18 M12 16 L13 18" stroke="#888"/><circle cx="7.5" cy="10" r="0.8" fill="#c03030"/></svg>
<svg style="position:absolute;left:1416px;top:731px" width="15" height="14" viewBox="0 0 15 14"><path d="M1.5 7 L5.5 12 L14 2" fill="none" stroke="#111" stroke-width="3.4"/><path d="M1.5 7 L5.5 12 L14 2" fill="none" stroke="#22c022" stroke-width="2.2"/></svg>
<svg style="position:absolute;left:1437px;top:754px" width="16" height="17" viewBox="0 0 16 17"><rect x="5" y="0.5" width="6" height="7" fill="#a8c8f0" stroke="#7090c0" stroke-width="0.8"/><path d="M1 8 L15 8 L15 14 C10 16 6 16 1 14 Z" fill="#b8b8b8" stroke="#606060"/><rect x="3" y="10" width="10" height="3" fill="#f0f0f0"/></svg>
<div style="position:absolute;left:1366px;top:781px;width:1px;height:3px;background:#a0a0a0"></div>
<div style="position:absolute;left:1577px;top:781px;width:1px;height:3px;background:#a0a0a0"></div>
<div style="position:absolute;left:1362px;top:787px;width:220px;height:14px;background:#e6e8ea;border:1px solid #d6d6d6"></div>
<svg style="position:absolute;left:1455px;top:785px" width="11" height="16" viewBox="0 0 11 16"><path d="M0 4 L5.5 0 L11 4 V16 H0 Z" fill="#0078d7"/></svg>
<div style="position:absolute;left:0px;top:823px;width:1600px;height:19px;background:#f0f0f0"></div>
<div style="position:absolute;left:0px;top:841px;width:1600px;height:1px;background:#d0d0d0"></div>
<div style="position:absolute;left:1px;top:824px;width:168px;height:18px;background:#cce4f7;border:1px solid #0a5fb4;border-bottom:none"></div>
<div class="t" style="left:1px;top:828px;width:168px;text-align:center;font-size:12.5px">Agenda</div>
<div style="position:absolute;left:801px;top:378px;width:281px;height:290px;background:#f2f2f2;border:1px solid #cccccc;box-shadow:2px 2px 2px rgba(0,0,0,0.4)"></div>
<div style="position:absolute;left:804px;top:403px;width:275px;height:22px;background:#91c9f7"></div>
<div class="t" style="left:836px;top:386.4px;font-size:12.6px;letter-spacing:-0.38px">Abrir Paciente</div>
<div class="t" style="left:836px;top:408.4px;font-size:12.6px;letter-spacing:-0.38px">Editar Agenda</div>
<div class="t" style="left:836px;top:430.4px;font-size:12.6px;letter-spacing:-0.38px">Listar Agendamentos deste Paciente</div>
<div class="t" style="left:836px;top:459.4px;font-size:12.6px;letter-spacing:-0.38px">Alterar Status</div>
<div class="t" style="left:836px;top:481.4px;font-size:12.6px;letter-spacing:-0.38px">Enviar para lista de espera</div>
<div class="t" style="left:836px;top:503.4px;font-size:12.6px;letter-spacing:-0.38px">Remover Agendamento</div>
<div class="t" style="left:836px;top:532.4px;font-size:12.6px;letter-spacing:-0.38px">Copiar Agendamento</div>
<div class="t" style="left:836px;top:554.4px;font-size:12.6px;letter-spacing:-0.38px">Copiar para...</div>
<div class="t" style="left:836px;top:576.4px;font-size:12.6px;letter-spacing:-0.38px">Recortar Agendamento</div>
<div class="t" style="left:836px;top:605.4px;font-size:12.6px;letter-spacing:-0.38px">Enviar Email/SMS Paciente</div>
<div class="t" style="left:836px;top:627.4px;font-size:12.6px;letter-spacing:-0.38px">Enviar Lembrete de Consulta(Sms)</div>
<div class="t" style="left:836px;top:649.4px;font-size:12.6px;letter-spacing:-0.38px">Enviar Lembrete de Consulta(Email)</div>
<div style="position:absolute;left:831px;top:450px;width:248px;height:1px;background:#d7d7d7"></div>
<div style="position:absolute;left:831px;top:523px;width:248px;height:1px;background:#d7d7d7"></div>
<div style="position:absolute;left:831px;top:596px;width:248px;height:1px;background:#d7d7d7"></div>
<svg style="position:absolute;left:1064px;top:460px" width="6" height="9" viewBox="0 0 6 9"><path d="M1 0.5 L5 4.5 L1 8.5" fill="none" stroke="#333" stroke-width="1.1"/></svg>
</body></html>
